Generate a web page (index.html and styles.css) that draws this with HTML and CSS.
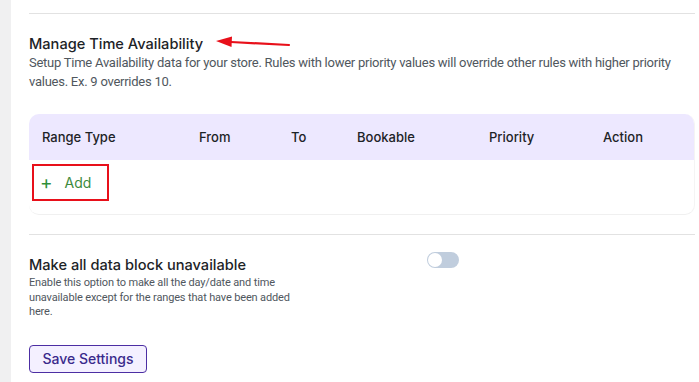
FILE: index.html
```html
<!DOCTYPE html>
<html>
<head>
<meta charset="utf-8">
<link rel="stylesheet" href="styles.css">
</head>
<body>
<div class="page">
  <aside class="side"></aside>
  <main class="main">
    <hr class="rule top">
    <section class="section">
      <div class="title-wrap">
        <h2 class="title">Manage Time Availability</h2>
        <svg class="arrow" width="80" height="14" viewBox="0 0 80 14">
          <path d="M76 9 L18 6" stroke="#e8101a" stroke-width="2.2" fill="none" stroke-linecap="round"/>
          <path d="M3 5 L19 0.5 L18.5 11 Z" fill="#e8101a"/>
        </svg>
      </div>
      <p class="desc">Setup Time Availability data for your store. Rules with lower priority values will override other rules with higher priority values. Ex. 9 overrides 10.</p>
    </section>
    <div class="table">
      <div class="thead">
        <span class="c c1">Range Type</span>
        <span class="c c2">From</span>
        <span class="c c3">To</span>
        <span class="c c4">Bookable</span>
        <span class="c c5">Priority</span>
        <span class="c c6">Action</span>
      </div>
      <div class="tbody">
        <button class="add"><span class="plus">+</span><span>Add</span></button>
      </div>
    </div>
    <hr class="rule mid">
    <section class="opt">
      <div class="opt-text">
        <h3 class="opt-title">Make all data block unavailable</h3>
        <p class="opt-desc">Enable this option to make all the day/date and time unavailable except for the ranges that have been added here.</p>
      </div>
      <span class="toggle"><span class="knob"></span></span>
    </section>
    <button class="save">Save Settings</button>
  </main>
</div>
</body>
</html>
```
FILE: styles.css
```css
* { box-sizing: border-box; }
html, body { margin: 0; padding: 0; background: #fff; }
body { font-family: Inter, "Noto Sans", sans-serif; color: #1d2327; }
.page { display: flex; min-height: 382px; }
.side { width: 11px; background: #f0f0f1; flex: none; }
.main { flex: 1; padding: 13px 4px 0 18px; }
.rule { border: 0; border-top: 1px solid #e2e2e2; margin: 0; }
.section { padding-top: 21px; }
.title-wrap { position: relative; }
.title { margin: 0; font-size: 14.6px; font-weight: 500; line-height: 18px; color: #1d2327; }
.arrow { position: absolute; left: 184px; top: 1px; }
.desc { margin: 0; font-family: Roboto, "Liberation Sans", sans-serif; font-size: 13px; letter-spacing: -0.25px; line-height: 19px; color: #50575e; padding-right: 8px; }
.table { margin-top: 23px; border-radius: 10px; border-bottom: 1px solid #f0f0f0; border-right: 1px solid #f4f4f4; overflow: hidden; }
.thead { background: #ede8ff; height: 46px; display: flex; align-items: center; font-size: 13px; font-weight: 500; color: #1d2327; }
.c { flex: none; }
.c1 { padding-left: 13px; width: 170px; }
.c2 { width: 92px; }
.c3 { width: 66px; }
.c4 { width: 132px; }
.c5 { width: 114px; }
.c6 { width: 80px; }
.tbody { height: 54px; padding: 4px 0 0 3px; }
.add { display: flex; align-items: center; gap: 12px; width: 77px; height: 37px; border: 2px solid #e8101a; background: #fff; padding: 0 0 0 6px; font-family: inherit; font-size: 14px; color: #3d8b3d; margin: 0; }
.plus { font-size: 19px; font-weight: 400; color: #2f8f3a; line-height: 1; margin-top: -1px; }
.mid { margin-top: 19px; }
.opt { display: flex; align-items: flex-start; padding-top: 20px; }
.opt-text { width: 265px; flex: none; }
.opt-title { margin: 0; font-size: 14.6px; font-weight: 500; line-height: 20px; color: #1d2327; white-space: nowrap; }
.opt-desc { margin: 1px 0 0; font-family: Roboto, "Liberation Sans", sans-serif; font-size: 11px; letter-spacing: -0.15px; line-height: 14.5px; color: #50575e; }
.toggle { position: relative; margin-left: 133px; margin-top: -3px; width: 32px; height: 16px; border-radius: 8px; background: #c0cddd; flex: none; }
.knob { position: absolute; left: 1px; top: 1px; width: 14px; height: 14px; border-radius: 50%; background: #fff; }
.save { margin-top: 25px; width: 118px; height: 28px; border: 1px solid #4c2ea3; border-radius: 4px; background: #f4f0ff; color: #3a2a8c; font-family: inherit; font-size: 14px; font-weight: 500; padding: 0; }
```
